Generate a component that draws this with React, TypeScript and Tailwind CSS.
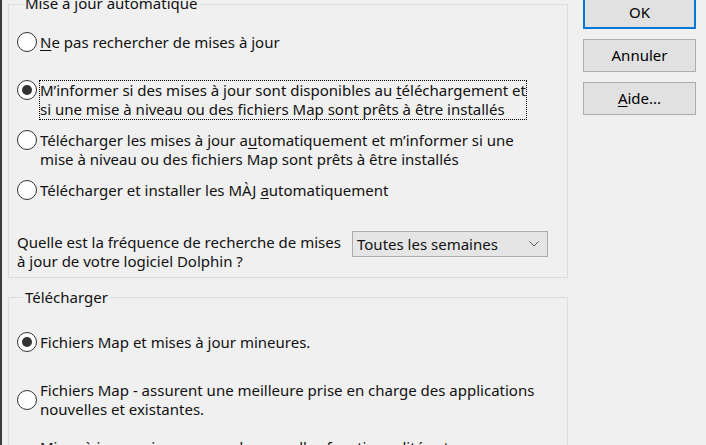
import React from "react";

function Radio({ checked }: { checked?: boolean }) {
    return (
        <span className="flex h-[20px] w-[20px] shrink-0 items-center justify-center rounded-full border-[1.5px] border-[#333] bg-white">
            {checked && <span className="h-[10px] w-[10px] rounded-full bg-[#333]" />}
        </span>
    );
}

function Option({
    checked,
    focused,
    center,
    className,
    children,
}: {
    checked?: boolean;
    focused?: boolean;
    center?: boolean;
    className?: string;
    children: React.ReactNode;
}) {
    return (
        <div className={`flex gap-[2px] ${center ? "items-center" : "items-start"} ${className ?? ""}`}>
            <Radio checked={checked} />
            <span
                className={`border leading-[19px] ${focused ? "border-dotted border-black" : "border-transparent"}`}
            >
                {children}
            </span>
        </div>
    );
}

function Button({ children, primary }: { children: React.ReactNode; primary?: boolean }) {
    return (
        <button
            className={`flex h-[33px] w-[113px] items-center justify-center bg-[#e1e1e1] text-[15px] text-black ${
                primary ? "border-2 border-[#0078d7]" : "border border-[#adadad]"
            }`}
        >
            {children}
        </button>
    );
}

export default function App() {
    return (
        <div className="flex h-[445px] w-[706px] overflow-hidden border-l-2 border-[#3c3c3c] bg-[#f0f0f0] font-['Noto_Sans',sans-serif] text-[15px] text-[#111]">
            <div className="w-[566px] pl-[6px]">
                <fieldset className="mt-[-7px] border border-[#dcdcdc] pb-[6px] pl-[8px]">
                    <legend className="ml-[6px] px-[2px] pb-[3px] leading-[20px]">Mise à jour automatique</legend>
                    <Option className="mt-[16px]">
                        <u className="underline-offset-[2px]">N</u>e pas rechercher de mises à jour
                    </Option>
                    <Option className="mt-[27px]" checked focused>
                        M’informer si des mises à jour sont disponibles au{" "}
                        <u className="underline-offset-[2px]">t</u>éléchargement et
                        <br />
                        si une mise à niveau ou des fichiers Map sont prêts à être installés
                    </Option>
                    <Option className="mt-[10px]">
                        Télécharger les mises à jour a<u className="underline-offset-[2px]">u</u>tomatiquement et m’informer si une
                        <br />
                        mise à niveau ou des fichiers Map sont prêts à être installés
                    </Option>
                    <Option className="mt-[10px]">
                        Télécharger et installer les MÀJ <u className="underline-offset-[2px]">a</u>utomatiquement
                    </Option>
                    <div className="mt-[32px] flex items-start">
                        <p className="w-[335px] leading-[19px]">
                            Quelle est la fréquence de recherche de mises
                            <br />à jour de votre logiciel Dolphin ?
                        </p>
                        <div className="mt-[-2px] flex h-[26px] w-[196px] items-center justify-between border border-[#acacac] bg-[#e5e5e5] pl-[4px] pr-[8px]">
                            <span>Toutes les semaines</span>
                            <svg width="10" height="6" viewBox="0 0 10 6" fill="none">
                                <path d="M0.5 0.5L5 5L9.5 0.5" stroke="#5a5a5a" strokeWidth="1" />
                            </svg>
                        </div>
                    </div>
                </fieldset>
                <fieldset className="mt-[9px] border border-[#dcdcdc] pl-[8px]">
                    <legend className="ml-[6px] px-[2px] leading-[20px]">Télécharger</legend>
                    <Option className="mt-[25px]" checked>
                        Fichiers Map et mises à jour mineures.
                    </Option>
                    <Option className="mt-[27px]" center>
                        Fichiers Map - assurent une meilleure prise en charge des applications
                        <br />
                        nouvelles et existantes.
                    </Option>
                    <Option className="mt-[17px]" center>
                        Mises à jour majeures avec de nouvelles fonctionnalités et
                        <br />
                        des améliorations importantes.
                    </Option>
                </fieldset>
            </div>
            <div className="ml-[15px] mt-[-4px] flex flex-col gap-[10px]">
                <Button primary>OK</Button>
                <Button>Annuler</Button>
                <Button>
                    <span>
                        <u className="underline-offset-[2px]">A</u>ide...
                    </span>
                </Button>
            </div>
        </div>
    );
}
